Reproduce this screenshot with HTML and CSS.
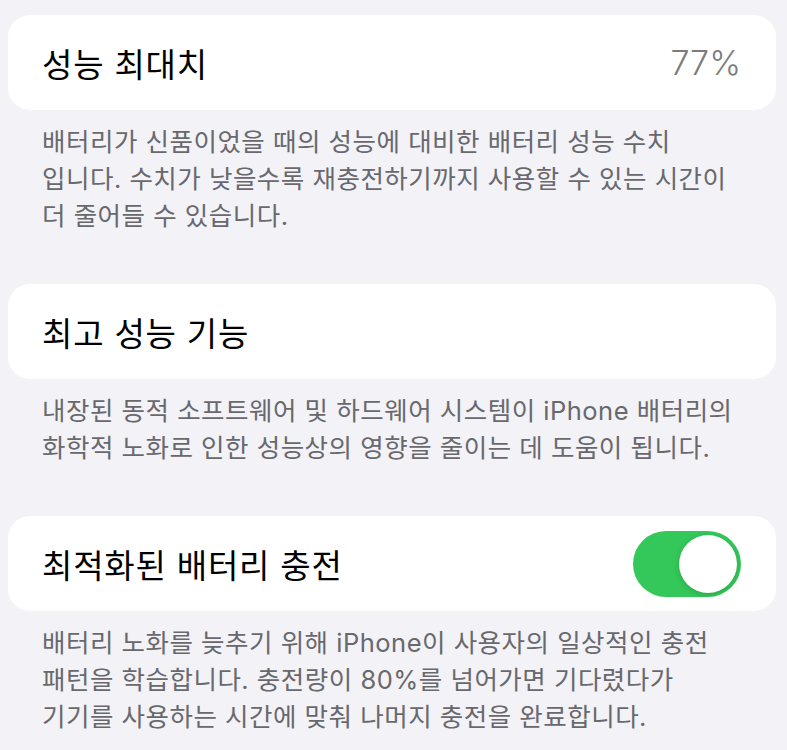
FILE: index.html
```html
<!DOCTYPE html>
<html lang="ko">
<head>
    <meta charset="utf-8" />
    <meta name="viewport" content="width=device-width, initial-scale=1" />
    <title>배터리 성능 상태</title>
    <link rel="stylesheet" href="styles.css">
</head>
<body>

<div class="settings">
    <div class="cell">
        <span class="cell-title">성능 최대치</span>
        <span class="cell-value">77%</span>
    </div>
    <p class="footer">
        배터리가 신품이었을 때의 성능에 대비한 배터리 성능 수치<br>
        입니다. 수치가 낮을수록 재충전하기까지 사용할 수 있는 시간이<br>
        더 줄어들 수 있습니다.
    </p>

    <div class="cell">
        <span class="cell-title">최고 성능 기능</span>
    </div>
    <p class="footer">
        내장된 동적 소프트웨어 및 하드웨어 시스템이 iPhone 배터리의<br>
        화학적 노화로 인한 성능상의 영향을 줄이는 데 도움이 됩니다.
    </p>

    <div class="cell">
        <span class="cell-title">최적화된 배터리 충전</span>
        <label class="switch">
            <input type="checkbox" id="optimized-charging" checked>
            <span class="track"><span class="knob"></span></span>
        </label>
    </div>
    <p class="footer">
        배터리 노화를 늦추기 위해 iPhone이 사용자의 일상적인 충전<br>
        패턴을 학습합니다. 충전량이 80%를 넘어가면 기다렸다가<br>
        기기를 사용하는 시간에 맞춰 나머지 충전을 완료합니다.
    </p>
</div>

</body>
</html>
```

FILE: styles.css
```css
* {
    margin: 0;
    padding: 0;
    box-sizing: border-box;
}

html, body {
    width: 100%;
    height: 100%;
}

body {
    overflow: hidden;
    background-color: #f2f2f7;
    font-family: "Inter", "Noto Sans CJK KR", sans-serif;
    color: #000;
}

.settings {
    padding: 15px 11px 0 8px;
}

.cell {
    display: flex;
    align-items: center;
    justify-content: space-between;
    height: 95px;
    padding: 0 35px 0 34px;
    background-color: #fff;
    border-radius: 22px;
}

.cell-title {
    font-size: 33px;
    letter-spacing: 0.8px;
}

.cell-value {
    font-size: 34px;
    font-weight: 300;
    color: #7c7c80;
}

.footer {
    padding: 13px 0 50px 34px;
    font-size: 25.5px;
    line-height: 37px;
    letter-spacing: 0.5px;
    color: #68686d;
    white-space: nowrap;
}

/* toggle switch */
.switch input {
    display: none;
}

.track {
    display: flex;
    align-items: center;
    justify-content: flex-end;
    width: 108px;
    height: 66px;
    padding: 4px;
    border-radius: 33px;
    background-color: #34c759;
}

.knob {
    width: 58px;
    height: 58px;
    border-radius: 50%;
    background-color: #fff;
    box-shadow: 0 2px 6px rgba(0, 0, 0, 0.15), 0 0 1px rgba(0, 0, 0, 0.1);
}
```
